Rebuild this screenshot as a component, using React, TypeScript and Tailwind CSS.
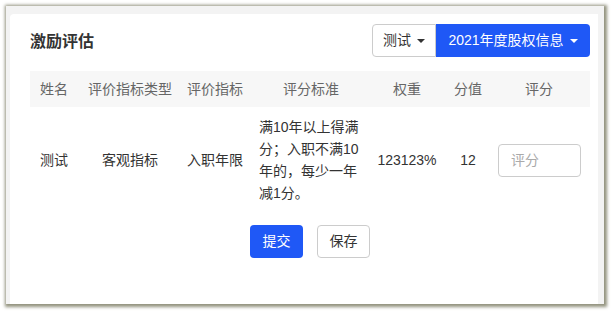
import React from "react";

const font = { fontFamily: '"Liberation Sans", "Noto Sans CJK SC", sans-serif' };

function Caret() {
  return <span className="ml-[6px] inline-block h-0 w-0 border-x-[4px] border-t-[4px] border-x-transparent border-t-current align-middle" />;
}

export default function App() {
  const cols = "grid grid-cols-[48px_104px_66px_126px_66px_56px_86px_8px]";
  return (
    <div className="h-[312px] w-[612px] bg-white pl-[6px] pt-[6px]" style={font}>
      <div className="flex h-[298px] w-[598px] flex-col bg-[#f3f3f3] pl-[4px] pr-[6px] pt-[8px] shadow-[1px_1px_3px_2px_rgba(120,120,95,0.8)]">
        <div className="flex flex-1 flex-col rounded-tl-[4px] bg-white pl-[20px] pr-[8px] pt-[10px] text-[14px] text-[#333]">
          <div className="flex h-[33px] items-center justify-between">
            <div className="pt-[2px] text-[16px] font-bold text-[#333]">激励评估</div>
            <div className="flex h-[33px]">
              <div className="flex w-[64px] items-center justify-center rounded-l-[4px] border border-[#ccc] text-[14px] text-[#333]">
                测试
                <Caret />
              </div>
              <div className="flex w-[154px] items-center justify-center rounded-r-[4px] bg-[#1f58f6] text-[14px] text-white">
                2021年度股权信息
                <Caret />
              </div>
            </div>
          </div>
          <div className="mt-[14px] w-[560px]">
            <div className={`${cols} h-[36px] items-center bg-[#f7f7f7] text-center text-[#666]`}>
              <div>姓名</div>
              <div>评价指标类型</div>
              <div>评价指标</div>
              <div>评分标准</div>
              <div>权重</div>
              <div>分值</div>
              <div>评分</div>
              <div />
            </div>
            <div className={`${cols} items-center pb-[7px] pt-[9px] text-center text-[#333]`}>
              <div>测试</div>
              <div>客观指标</div>
              <div>入职年限</div>
              <div className="px-[11px] text-left leading-[22px]">
                满10年以上得满<br />分；入职不满10<br />年的，每少一年<br />减1分。
              </div>
              <div>123123%</div>
              <div>12</div>
              <div className="flex justify-start pl-[2px]">
                <input
                  placeholder="评分"
                  className="h-[33px] w-[83px] rounded-[4px] border border-[#ccc] px-[12px] text-[14px] text-[#333] outline-none placeholder:text-[#aaa]"
                  style={font}
                />
              </div>
              <div />
            </div>
          </div>
          <div className="mt-[14px] flex w-[560px] justify-center gap-[14px]">
            <button className="h-[33px] w-[53px] rounded-[4px] bg-[#1f58f6] text-[14px] text-white" style={font}>提交</button>
            <button className="h-[33px] w-[53px] rounded-[4px] border border-[#ccc] bg-white text-[14px] text-[#333]" style={font}>保存</button>
          </div>
        </div>
      </div>
    </div>
  );
}
